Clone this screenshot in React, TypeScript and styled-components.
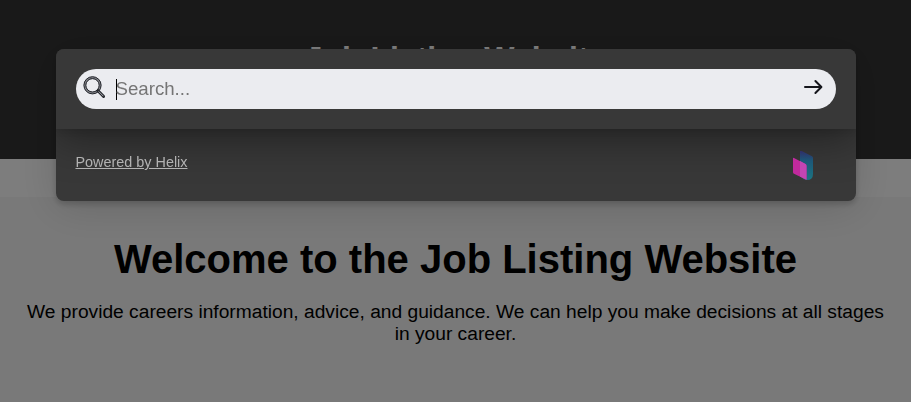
import React from "react";
import styled, { createGlobalStyle } from "styled-components";

const GlobalStyle = createGlobalStyle`
  * { box-sizing: border-box; }
  body {
    margin: 0;
    height: 402px;
    overflow: hidden;
    background: #f2f2f2;
    font-family: "Liberation Sans", Arial, sans-serif;
    color: #000;
  }
`;

const Header = styled.header`
  height: 159px;
  padding-top: 40px;
  background: #333;
  color: #fff;
  text-align: center;
`;

const SiteTitle = styled.h1`
  margin: 0;
  font-size: 32px;
  line-height: 37px;
`;

const NavStrip = styled.nav`
  height: 38px;
  background: #fafafa;
`;

const Intro = styled.main`
  padding: 39px 20px 0;
  text-align: center;
`;

const IntroTitle = styled.h2`
  margin: 0;
  font-size: 40px;
  line-height: 46px;
`;

const IntroText = styled.p`
  margin: 19px 0 0;
  font-size: 19.2px;
  line-height: 22px;
`;

const Backdrop = styled.div`
  position: fixed;
  inset: 0;
  background: rgba(0, 0, 0, 0.5);
`;

const Dialog = styled.section`
  width: 800px;
  height: 152px;
  margin: 49px auto 0;
  display: flex;
  flex-direction: column;
  border-radius: 8px;
  overflow: hidden;
  background: #383838;
  box-shadow: 0 3px 6px rgba(0, 0, 0, 0.2), 0 6px 40px rgba(0, 0, 0, 0.14);
`;

const SearchArea = styled.div`
  height: 80px;
  padding: 20px;
  background: #383838;
  box-shadow: 0 3px 6px rgba(0, 0, 0, 0.08), 0 10px 40px rgba(0, 0, 0, 0.4);
`;

const SearchField = styled.label`
  display: flex;
  align-items: center;
  height: 40px;
  padding: 0 11px 0 7px;
  border-radius: 20px;
  background: #ebecf0;
`;

const Caret = styled.span`
  width: 1px;
  height: 21px;
  margin: 1px -1px 0 11px;
  background: #000;
`;

const SearchInput = styled.input`
  flex: 1;
  min-width: 0;
  height: 38px;
  padding: 0;
  border: 0;
  outline: 0;
  background: transparent;
  font: 18.67px "Liberation Sans", Arial, sans-serif;
  &::placeholder { color: #757575; }
`;

const Glyph = styled.svg<{ $size: number }>`
  flex: none;
  width: ${(p) => p.$size}px;
  height: ${(p) => p.$size}px;
  margin-bottom: 4px;
`;

const Footer = styled.footer`
  flex: 1;
  display: flex;
  justify-content: space-between;
  padding: 22px 42px 0 20px;
`;

const Credit = styled.a`
  height: 22px;
  color: #b2b2b2;
  font-size: 14.4px;
  line-height: 22px;
  text-decoration: underline;
`;

const Logo = styled.svg`
  width: 22px;
  height: 30px;
`;

export default function App() {
  return (
    <>
      <GlobalStyle />
      <Header>
        <SiteTitle>Job Listing Website</SiteTitle>
      </Header>
      <NavStrip />
      <Intro>
        <IntroTitle>Welcome to the Job Listing Website</IntroTitle>
        <IntroText>
          We provide careers information, advice, and guidance. We can help you
          make decisions at all stages in your career.
        </IntroText>
      </Intro>
      <Backdrop>
        <Dialog role="dialog" aria-label="Search">
          <SearchArea>
            <SearchField>
              <Glyph $size={22} viewBox="0 0 22 22" fill="none" aria-hidden>
                <circle cx="9.5" cy="9.3" r="7.6" stroke="#85878d" strokeWidth="2.4" />
                <circle cx="9.5" cy="9.3" r="8.6" stroke="#24262c" strokeWidth="1" />
                <circle cx="9.5" cy="9.3" r="6.7" stroke="#24262c" strokeWidth="1" />
                <path d="M15 14.8L20.6 20.4" stroke="#24262c" strokeWidth="3" strokeLinecap="square" />
                <path d="M15.6 15.4L20.4 20.2" stroke="#a9abb0" strokeWidth="1" />
              </Glyph>
              <Caret />
              <SearchInput placeholder="Search..." aria-label="Search" />
              <Glyph $size={24} viewBox="0 0 24 24" fill="none" aria-hidden>
                <path
                  d="M4 12H20.3M14.4 6L20.4 12L14.4 18"
                  stroke="#15161c"
                  strokeWidth="2"
                  strokeLinecap="round"
                  strokeLinejoin="round"
                />
              </Glyph>
            </SearchField>
          </SearchArea>
          <Footer>
            <Credit href="#">Powered by Helix</Credit>
            <Logo viewBox="0 0 22 30" aria-hidden>
              <defs>
                <linearGradient id="sheet" x1="0" y1="0" x2="0" y2="1">
                  <stop offset="0" stopColor="#302c68" />
                  <stop offset=".35" stopColor="#1c5878" />
                  <stop offset="1" stopColor="#1b7482" />
                </linearGradient>
              </defs>
              <path d="M8 .6Q8-1 9.5-.1L20 5.3Q21 5.9 21 7.3V23Q21 29 15 29Q13.5 29 11.5 28L8 25Z" fill="url(#sheet)" />
              <path d="M1 7.6Q1 6.4 2 7L13.5 12.9Q14.5 13.4 14.5 14.9V28.7L2 22.7Q1 22.2 1 21.2Z" fill="#c12a9d" />
              <path d="M8 10L13.5 12.9Q14.5 13.4 14.5 14.9V28.7L8 25.5Z" fill="#c145b3" />
            </Logo>
          </Footer>
        </Dialog>
      </Backdrop>
    </>
  );
}
